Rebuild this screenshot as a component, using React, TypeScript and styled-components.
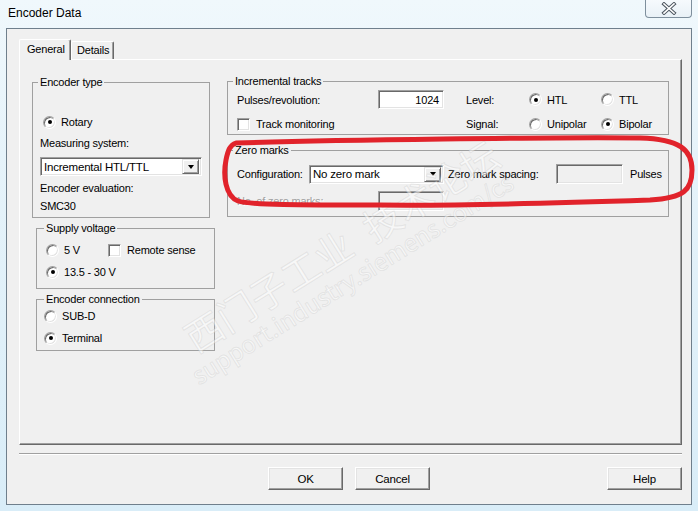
import styled, { createGlobalStyle } from 'styled-components'

const GlobalStyle = createGlobalStyle`
  html, body {
    margin: 0;
    padding: 0;
  }
  body {
    width: 698px;
    height: 511px;
    overflow: hidden;
    background: #dcedf7;
    font-family: "Liberation Sans", Arial, sans-serif;
    font-size: 11px;
    letter-spacing: -0.2px;
    color: #000;
  }
  * {
    box-sizing: border-box;
  }
`

const Window = styled.div`
  position: relative;
  width: 698px;
  height: 511px;
  display: flex;
  flex-direction: column;
  padding: 0 6px 6px 6px;
  background: linear-gradient(180deg, #f0f8fc 0%, #e6f3fa 30%, #d9edf8 100%);
  overflow: hidden;
`

const TitleBar = styled.div`
  height: 28px;
  display: flex;
  align-items: flex-start;
  padding-left: 2px;
`

const Title = styled.div`
  padding-top: 5px;
  line-height: 16px;
  font-size: 12px;
  letter-spacing: 0;
  color: #000;
`

const CloseButton = styled.div`
  margin-left: auto;
  width: 47px;
  height: 18px;
  border: 1px solid #7e8f9d;
  border-top: none;
  border-radius: 0 0 4px 4px;
  background: linear-gradient(180deg, #f6fafd 0%, #e9f1f7 100%);
  display: flex;
  align-items: center;
  justify-content: center;
`

const Client = styled.div`
  flex: 1;
  display: flex;
  flex-direction: column;
  border: 1px solid #6f7f8c;
  background: #f0f0f0;
  padding: 10px 0 0 12px;
`

const TabStrip = styled.div`
  height: 20px;
  display: flex;
  align-items: flex-end;
`

const Tab = styled.div<{ $active?: boolean }>`
  position: relative;
  z-index: ${(p) => (p.$active ? 2 : 1)};
  width: ${(p) => (p.$active ? 52 : 43)}px;
  height: ${(p) => (p.$active ? 21 : 18)}px;
  margin-bottom: ${(p) => (p.$active ? -1 : 0)}px;
  padding-left: ${(p) => (p.$active ? 7 : 5)}px;
  padding-top: ${(p) => (p.$active ? 3 : 2)}px;
  line-height: 13px;
  background: #f0f0f0;
  border-top: 1px solid #fff;
  border-left: 1px solid #fff;
  border-right: 1px solid #696969;
  border-radius: 2px 2px 0 0;
  box-shadow: inset -1px 0 0 #a0a0a0;
`

const Panel = styled.div`
  position: relative;
  width: 663px;
  height: 386px;
  border-top: 1px solid #fff;
  border-left: 1px solid #fff;
  border-right: 1px solid #696969;
  border-bottom: 1px solid #696969;
  box-shadow: inset -1px -1px 0 #a0a0a0;
`

const Columns = styled.div`
  display: flex;
  align-items: flex-start;
  gap: 12px;
  padding: 15px 0 0 12px;
`

const LeftColumn = styled.div`
  width: 183px;
  margin-top: 1px;
  display: flex;
  flex-direction: column;
`

const RightColumn = styled.div`
  width: 442px;
  display: flex;
  flex-direction: column;
`

const Group = styled.fieldset<{ $w: number; $h: number; $mt?: number; $ml?: number }>`
  margin: ${(p) => p.$mt ?? 0}px 0 0 ${(p) => p.$ml ?? 0}px;
  width: ${(p) => p.$w}px;
  height: ${(p) => p.$h}px;
  min-width: 0;
  padding: 0;
  border: 1px solid #a0a0a0;
  display: block;
`

const Caption = styled.legend<{ $indent: number }>`
  margin-left: ${(p) => p.$indent}px;
  padding: 0 2px;
  line-height: 13px;
  font-size: 11px;
`

const GroupBody = styled.div<{ $pad: number }>`
  padding-left: ${(p) => p.$pad}px;
`

const Line = styled.div<{ $top?: number; $h?: number }>`
  margin-top: ${(p) => p.$top ?? 0}px;
  height: ${(p) => p.$h ?? 16}px;
  display: flex;
  align-items: center;
  white-space: nowrap;
`

const GridLine = styled.div<{ $top?: number; $h?: number }>`
  margin-top: ${(p) => p.$top ?? 0}px;
  height: ${(p) => p.$h ?? 16}px;
  display: grid;
  grid-template-columns: 229px 63px 72px 1fr;
  align-items: center;
  white-space: nowrap;
`

const Label = styled.span<{ $w?: number; $ml?: number; $disabled?: boolean }>`
  display: inline-block;
  width: ${(p) => (p.$w ? `${p.$w}px` : 'auto')};
  margin-left: ${(p) => p.$ml ?? 0}px;
  color: ${(p) => (p.$disabled ? '#a0a0a0' : '#000')};
  text-shadow: ${(p) => (p.$disabled ? '1px 1px 0 #fff' : 'none')};
`

const Option = styled.label<{ $w?: number; $ml?: number }>`
  display: inline-flex;
  align-items: center;
  gap: 5px;
  width: ${(p) => (p.$w ? `${p.$w}px` : 'auto')};
  margin-left: ${(p) => p.$ml ?? 0}px;
`

const RadioDot = styled.span<{ $on?: boolean }>`
  position: relative;
  width: 13px;
  height: 13px;
  border-radius: 50%;
  background: #fff;
  border: 1px solid;
  border-color: #a0a0a0 #fff #fff #a0a0a0;
  box-shadow: inset 1px 1px 0 #696969, inset -1px -1px 0 #e3e3e3;
  flex: none;

  &::after {
    content: '';
    display: ${(p) => (p.$on ? 'block' : 'none')};
    position: absolute;
    left: 3.5px;
    top: 3.5px;
    width: 4px;
    height: 4px;
    border-radius: 50%;
    background: #000;
  }
`

const CheckBox = styled.span`
  width: 13px;
  height: 13px;
  background: #fff;
  border: 1px solid;
  border-color: #a0a0a0 #fff #fff #a0a0a0;
  box-shadow: inset 1px 1px 0 #696969, inset -1px -1px 0 #e3e3e3;
  flex: none;
`

const CheckOption = styled(Option)`
  gap: 6px;
`

const Sunken = styled.div<{ $w: number; $h?: number; $disabled?: boolean }>`
  width: ${(p) => p.$w}px;
  height: ${(p) => p.$h ?? 19}px;
  background: ${(p) => (p.$disabled ? '#f0f0f0' : '#fff')};
  border: 1px solid;
  border-color: #a0a0a0 #fff #fff #a0a0a0;
  box-shadow: inset 1px 1px 0 #696969, inset -1px -1px 0 #e3e3e3;
  display: flex;
  align-items: center;
  flex: none;
`

const FieldValue = styled.span`
  flex: 1;
  text-align: right;
  padding-right: 4px;
`

const ComboText = styled.span`
  flex: 1;
  padding-left: 3px;
  font-size: 11.5px;
`

const ComboArrow = styled.span`
  width: 17px;
  height: 15px;
  margin-right: 2px;
  background: #f0f0f0;
  border: 1px solid;
  border-color: #e3e3e3 #696969 #696969 #e3e3e3;
  box-shadow: inset 1px 1px 0 #fff, inset -1px -1px 0 #a0a0a0;
  display: flex;
  align-items: center;
  justify-content: center;

  &::after {
    content: '';
    width: 0;
    height: 0;
    border-left: 3.5px solid transparent;
    border-right: 3.5px solid transparent;
    border-top: 4px solid #000;
  }
`

const Separator = styled.div`
  width: 663px;
  margin-top: 8px;
  border-top: 1px solid #a0a0a0;
  border-bottom: 1px solid #fff;
`

const ButtonRow = styled.div`
  width: 663px;
  margin-top: 12px;
  display: flex;
  gap: 12px;
  padding-left: 249px;
`

const PushButton = styled.div<{ $push?: boolean }>`
  width: 75px;
  height: 23px;
  margin-left: ${(p) => (p.$push ? 'auto' : '0')};
  background: #f0f0f0;
  border: 1px solid;
  border-color: #fff #696969 #696969 #fff;
  box-shadow: inset -1px -1px 0 #a0a0a0, inset 1px 1px 0 #e3e3e3;
  display: flex;
  align-items: center;
  justify-content: center;
  font-size: 11.5px;
`

const Overlay = styled.svg`
  position: absolute;
  left: 0;
  top: 0;
  pointer-events: none;
`

// watermark text, placed by its centre
const Watermark = styled.span<{ $x: number; $y: number; $size: number; $deg: number }>`
  position: absolute;
  left: ${(p) => p.$x}px;
  top: ${(p) => p.$y}px;
  font-size: ${(p) => p.$size}px;
  line-height: 1;
  letter-spacing: 0;
  white-space: nowrap;
  transform: translate(-50%, -50%) rotate(${(p) => p.$deg}deg);
  color: rgba(255, 255, 255, 0.5);
  -webkit-text-stroke: 1px rgba(170, 170, 170, 0.22);
  pointer-events: none;
  font-family: "Noto Sans CJK SC", "Liberation Sans", sans-serif;
`

function Radio({ on, children, w, ml }: { on?: boolean; children: string; w?: number; ml?: number }) {
  return (
    <Option $w={w} $ml={ml}>
      <RadioDot $on={on} />
      {children}
    </Option>
  )
}

function Check({ children, w, ml }: { children: string; w?: number; ml?: number }) {
  return (
    <CheckOption $w={w} $ml={ml}>
      <CheckBox />
      {children}
    </CheckOption>
  )
}

function Combo({ w, text }: { w: number; text: string }) {
  return (
    <Sunken $w={w}>
      <ComboText>{text}</ComboText>
      <ComboArrow />
    </Sunken>
  )
}

export default function App() {
  return (
    <>
      <GlobalStyle />
      <Window>
        <TitleBar>
          <Title>Encoder Data</Title>
          <CloseButton>
            <svg width="16" height="13" viewBox="0 0 16 13">
              <path d="M3 2 L13 11 M13 2 L3 11" stroke="#4d5660" strokeWidth="3.6" strokeLinecap="square" />
              <path d="M3 2 L13 11 M13 2 L3 11" stroke="#fff" strokeWidth="1.6" strokeLinecap="square" />
            </svg>
          </CloseButton>
        </TitleBar>
        <Client>
          <TabStrip>
            <Tab $active>General</Tab>
            <Tab>Details</Tab>
          </TabStrip>
          <Panel>
            <Columns>
              <LeftColumn>
                <Group $w={178} $h={142}>
                  <Caption $indent={5}>Encoder type</Caption>
                  <GroupBody $pad={7}>
                    <Line $top={25}>
                      <Radio on ml={3}>Rotary</Radio>
                    </Line>
                    <Line $top={5}>Measuring system:</Line>
                    <Line $top={6} $h={19}>
                      <Combo w={162} text="Incremental HTL/TTL" />
                    </Line>
                    <Line $top={4}>Encoder evaluation:</Line>
                    <Line $top={2}>SMC30</Line>
                  </GroupBody>
                </Group>
                <Group $w={179} $h={67} $mt={4} $ml={4}>
                  <Caption $indent={7}>Supply voltage</Caption>
                  <GroupBody $pad={9}>
                    <Line $top={7}>
                      <Radio w={62}>5 V</Radio>
                      <Check>Remote sense</Check>
                    </Line>
                    <Line $top={6}>
                      <Radio on>13.5 - 30 V</Radio>
                    </Line>
                  </GroupBody>
                </Group>
                <Group $w={179} $h={58} $mt={4} $ml={4}>
                  <Caption $indent={7}>Encoder connection</Caption>
                  <GroupBody $pad={7}>
                    <Line $top={2}>
                      <Radio>SUB-D</Radio>
                    </Line>
                    <Line $top={6}>
                      <Radio on>Terminal</Radio>
                    </Line>
                  </GroupBody>
                </Group>
              </LeftColumn>
              <RightColumn>
                <Group $w={442} $h={60}>
                  <Caption $indent={5}>Incremental tracks</Caption>
                  <GroupBody $pad={9}>
                    <GridLine $top={2} $h={19}>
                      <Line $h={19}>
                        <Label $w={141}>Pulses/revolution:</Label>
                        <Sunken $w={66}>
                          <FieldValue>1024</FieldValue>
                        </Sunken>
                      </Line>
                      <Label>Level:</Label>
                      <Radio on>HTL</Radio>
                      <Radio>TTL</Radio>
                    </GridLine>
                    <GridLine $top={7}>
                      <Check>Track monitoring</Check>
                      <Label>Signal:</Label>
                      <Radio>Unipolar</Radio>
                      <Radio on>Bipolar</Radio>
                    </GridLine>
                  </GroupBody>
                </Group>
                <Group $w={442} $h={73} $mt={9}>
                  <Caption $indent={5}>Zero marks</Caption>
                  <GroupBody $pad={9}>
                    <Line $top={7} $h={20}>
                      <Label $w={72}>Configuration:</Label>
                      <Combo w={135} text="No zero mark" />
                      <Label $w={108} $ml={4}>Zero mark spacing:</Label>
                      <Sunken $w={67} $h={20} $disabled />
                      <Label $ml={7}>Pulses</Label>
                    </Line>
                    <Line $top={7} $h={20}>
                      <Label $w={141} $disabled>No. of zero marks:</Label>
                      <Sunken $w={66} $h={20} $disabled />
                    </Line>
                  </GroupBody>
                </Group>
              </RightColumn>
            </Columns>
          </Panel>
          <Separator />
          <ButtonRow>
            <PushButton>OK</PushButton>
            <PushButton>Cancel</PushButton>
            <PushButton $push>Help</PushButton>
          </ButtonRow>
        </Client>

        <Watermark $x={268} $y={290} $size={38} $deg={-32}>西门子工业</Watermark>
        <Watermark $x={430} $y={190} $size={38} $deg={-32}>技术论坛</Watermark>
        <Watermark $x={352} $y={278} $size={24} $deg={-32}>support.industry.siemens.com/cs</Watermark>

        <Overlay width="698" height="511" viewBox="0 0 698 511">
          <path
            d="M236 143 C330 140 560 137 640 138 C680 139 692 150 692 170 C692 190 684 198 650 200 C560 203 470 206 380 205 C300 205 250 205 238 201 C225 196 223 175 226 160 C228 150 230 145 236 143 Z"
            fill="none"
            stroke="#e1232b"
            strokeWidth="5"
            strokeLinejoin="round"
          />
        </Overlay>
      </Window>
    </>
  )
}
